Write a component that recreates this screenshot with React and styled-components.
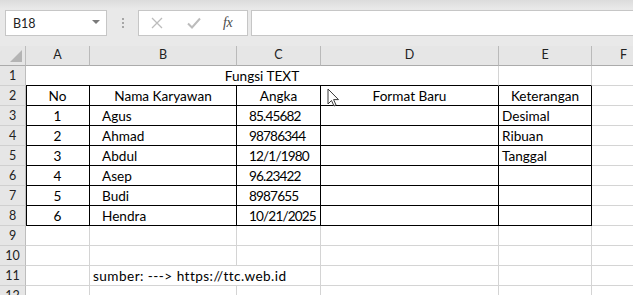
import React from "react";
import styled, { createGlobalStyle } from "styled-components";

const GlobalStyle = createGlobalStyle`
  html, body { margin: 0; padding: 0; background: #ffffff; }
  body { font-family: Lato, "Liberation Sans", sans-serif; }
  * { box-sizing: border-box; }
`;

const Window = styled.div`
  position: relative;
  width: 633px;
  height: 295px;
  overflow: hidden;
  background: #ffffff;
`;

const Toolbar = styled.div`
  height: 46px;
  background: #e9e9e9;
  background-image: linear-gradient(#dcdcdc, #e9e9e9 9px);
  display: flex;
  align-items: flex-start;
  padding: 10px 0 0 5px;
`;

const NameBox = styled.div`
  width: 102px;
  height: 26px;
  background: #ffffff;
  border: 1px solid #c6c6c6;
  display: flex;
  align-items: center;
  justify-content: space-between;
  padding: 0 6px 0 7px;
  font-size: 12.5px;
  color: #222;
`;

const DropArrow = styled.span`
  width: 0;
  height: 0;
  border-left: 4px solid transparent;
  border-right: 4px solid transparent;
  border-top: 4px solid #7a7a7a;
  margin-top: -2px;
`;

const Grip = styled.div`
  width: 31px;
  height: 26px;
  display: flex;
  flex-direction: column;
  align-items: center;
  justify-content: center;
  gap: 2px;
  & > span {
    width: 2px;
    height: 2px;
    background: #a6a6a6;
  }
`;

const FxButtons = styled.div`
  width: 110px;
  height: 26px;
  background: #ffffff;
  border: 1px solid #c6c6c6;
  display: flex;
  align-items: center;
  padding: 0 0 0 12px;
`;

const IconSlot = styled.span`
  width: ${(p) => p.$w}px;
  display: flex;
  align-items: center;
  justify-content: flex-start;
`;

const FxLabel = styled.span`
  font-family: "Liberation Serif", "DejaVu Serif", serif;
  font-style: italic;
  font-size: 14px;
  color: #4a4a4a;
  letter-spacing: -0.5px;
`;

const FormulaInput = styled.div`
  flex: 1;
  height: 26px;
  margin-left: 3px;
  margin-right: -2px;
  background: #ffffff;
  border: 1px solid #c6c6c6;
`;

const Sheet = styled.div`
  display: grid;
  grid-template-columns: 26px 64px 147px 84px 178px 93px 64px;
  grid-auto-rows: 20px;
  width: 656px;
`;

const Corner = styled.div`
  position: relative;
  background: #e6e6e6;
  border-right: 1px solid #bdbdbd;
  border-bottom: 1px solid #ababab;
  &::after {
    content: "";
    position: absolute;
    right: 3px;
    bottom: 3px;
    width: 0;
    height: 0;
    border-left: 12px solid transparent;
    border-bottom: 12px solid #b4b4b4;
  }
`;

const ColHead = styled.div`
  background: #e6e6e6;
  border-right: 1px solid #bababa;
  border-bottom: 1px solid #ababab;
  text-align: center;
  font-size: 12.5px;
  line-height: 18px;
  color: #222;
`;

const RowHead = styled.div`
  background: #e6e6e6;
  border-right: 1px solid #bdbdbd;
  border-bottom: 1px solid #d0d0d0;
  text-align: center;
  font-size: 12.5px;
  line-height: 20px;
  color: #222;
`;

const Cell = styled.div`
  grid-column: span ${(p) => p.$span || 1};
  border-right: 1px solid ${(p) => (p.$boxRight ? "#000" : "#d4d4d4")};
  border-bottom: 1px solid ${(p) => (p.$boxBottom ? "#000" : "#d4d4d4")};
  box-shadow: ${(p) => (p.$boxLeft ? "inset 1px 0 0 #000" : "none")};
  text-align: ${(p) => p.$align || "left"};
  padding: 2px ${(p) => (p.$align === "center" ? 0 : 3)}px 0
    ${(p) => (p.$align === "center" ? 0 : p.$indent ? 12 : 3)}px;
  font-size: 13.6px;
  line-height: 17px;
  letter-spacing: ${(p) => p.$spacing || 0}px;
  color: #000;
  white-space: nowrap;
  overflow: visible;
`;

const Cursor = styled.svg`
  position: absolute;
  left: 327px;
  top: 88px;
`;

const COLS = ["A", "B", "C", "D", "E", "F"];

const data = [
  ["1", "Agus", "85.45682", "", "Desimal"],
  ["2", "Ahmad", "98786344", "", "Ribuan"],
  ["3", "Abdul", "12/1/1980", "", "Tanggal"],
  ["4", "Asep", "96.23422", "", ""],
  ["5", "Budi", "8987655", "", ""],
  ["6", "Hendra", "10/21/2025", "", ""],
];

function TableRow({ n, values, header }) {
  return (
    <>
      <RowHead>{n}</RowHead>
      <Cell $boxLeft $boxRight $boxBottom $align="center">{values[0]}</Cell>
      <Cell $boxRight $boxBottom $align={header ? "center" : "left"} $indent>
        {values[1]}
      </Cell>
      <Cell
        $boxRight
        $boxBottom
        $align={header ? "center" : "left"}
        $indent
        $spacing={header ? 0 : -0.85}
      >
        {values[2]}
      </Cell>
      <Cell $boxRight $boxBottom $align="center">{values[3]}</Cell>
      <Cell $boxRight $boxBottom $align={header ? "center" : "left"}>
        {values[4]}
      </Cell>
      <Cell />
    </>
  );
}

function EmptyRow({ n }) {
  return (
    <>
      <RowHead>{n}</RowHead>
      {COLS.map((c) => (
        <Cell key={c} />
      ))}
    </>
  );
}

export default function App() {
  return (
    <Window>
      <GlobalStyle />
      <Toolbar>
        <NameBox>
          <span>B18</span>
          <DropArrow />
        </NameBox>
        <Grip>
          <span />
          <span />
          <span />
        </Grip>
        <FxButtons>
          <IconSlot $w={36}>
            <svg width="12" height="12" viewBox="0 0 12 12">
              <path d="M1 1 L11 11 M11 1 L1 11" stroke="#bcbcbc" strokeWidth="1.3" fill="none" />
            </svg>
          </IconSlot>
          <IconSlot $w={36}>
            <svg width="14" height="12" viewBox="0 0 14 12">
              <path d="M1 6.5 L5 10.5 L13 1.5" stroke="#bcbcbc" strokeWidth="2" fill="none" />
            </svg>
          </IconSlot>
          <IconSlot $w={20}>
            <FxLabel>fx</FxLabel>
          </IconSlot>
        </FxButtons>
        <FormulaInput />
      </Toolbar>
      <Sheet>
        <Corner />
        {COLS.map((c) => (
          <ColHead key={c}>{c}</ColHead>
        ))}

        <RowHead>1</RowHead>
        <Cell $span={4} $boxBottom $align="center">Fungsi TEXT</Cell>
        <Cell $boxBottom />
        <Cell />

        <TableRow n={2} header values={["No", "Nama Karyawan", "Angka", "Format Baru", "Keterangan"]} />
        {data.map((row, i) => (
          <TableRow key={i} n={i + 3} values={row} />
        ))}

        <EmptyRow n={9} />
        <EmptyRow n={10} />

        <RowHead>11</RowHead>
        <Cell />
        <Cell $span={2} $spacing={0.45}>sumber: ---&gt; https://ttc.web.id</Cell>
        <Cell />
        <Cell />
        <Cell />

        <EmptyRow n={12} />
      </Sheet>
      <Cursor width="14" height="20" viewBox="0 0 14 20">
        <path
          d="M1 1 L1 16 L4.5 12.5 L7 18 L9 17 L6.6 11.6 L11.5 11.6 Z"
          fill="#ffffff"
          stroke="#3a3a3a"
          strokeWidth="1"
          strokeLinejoin="round"
        />
      </Cursor>
    </Window>
  );
}
